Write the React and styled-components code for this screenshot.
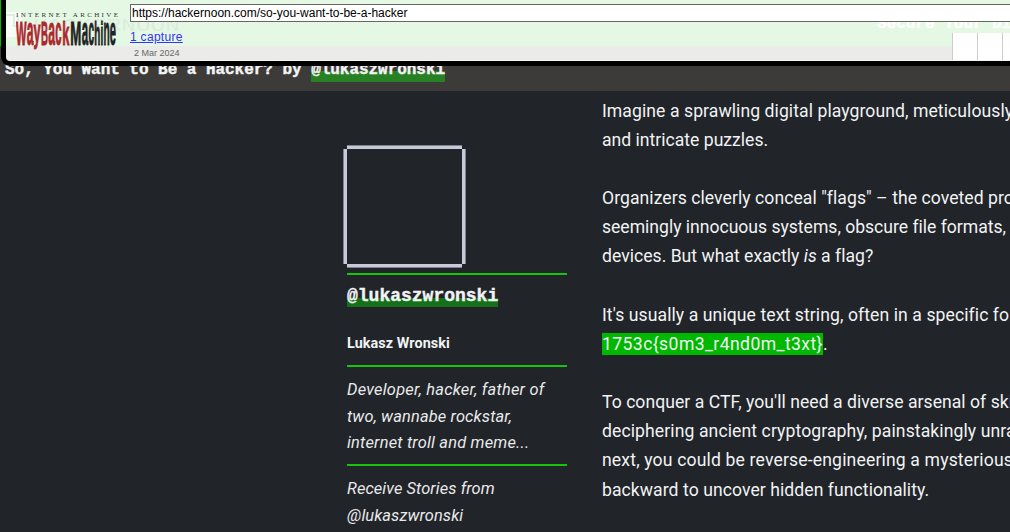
import React from "react";
import styled, { createGlobalStyle } from "styled-components";

const GlobalStyle = createGlobalStyle`
  *, *::before, *::after { box-sizing: border-box; }
  html, body { margin: 0; height: 532px; overflow: hidden; background: #212428; }
  p, h1, h2, h3 { margin: 0; }
`;

const Page = styled.div`
  position: relative;
  width: 1010px;
  height: 532px;
  overflow: hidden;
  background: #212428;
  color: #f1f3f5;
  font-family: Roboto, "Liberation Sans", sans-serif;
`;

/* Archive toolbar, floating over the site header */
const ArchiveBar = styled.header`
  position: absolute;
  z-index: 2;
  top: 0;
  left: 1px;
  width: 1040px;
  height: 66px;
  display: flex;
  overflow: hidden;
  border: solid #000;
  border-width: 0 0 5px 5px;
  border-radius: 0 0 0 9px;
  background: linear-gradient(#e4f8e4 0 46px, #ebebea 46px 60px, #f6f6f5 60px);
  font-family: "Liberation Sans", sans-serif;
`;

const LogoColumn = styled.div`
  position: relative;
  flex: none;
  width: 124px;
  padding: 9px 0 0 10px;
`;

const CaptureColumn = styled.div`
  position: relative;
  flex: 1;
  display: flex;
  flex-direction: column;
  align-items: flex-start;
`;

const UrlField = styled.div`
  position: relative;
  z-index: 1;
  width: 100%;
  height: 18px;
  margin-top: 4px;
  padding-left: 1px;
  border: 1px solid #666;
  background: #fff;
  color: #000;
  font-size: 12px;
  line-height: 16px;
  letter-spacing: 0;
`;

const CaptureLink = styled.a`
  margin-top: 8px;
  color: #33f;
  font-size: 12px;
  line-height: 14px;
  letter-spacing: 0.3px;
  text-decoration: underline;
`;

const CaptureDate = styled.div`
  margin: 3px 0 0 4px;
  color: #666;
  font-size: 9px;
  line-height: 12px;
`;

const Sparkline = styled.div`
  position: absolute;
  top: 33px;
  left: 822px;
  display: flex;
`;

const Year = styled.span`
  width: 25px;
  height: 27px;
  border-left: 1px solid #ccc;
  background: #fff;
`;

const GhostMark = styled.svg`
  position: absolute;
  top: 0;
  left: 0;
  overflow: visible;
`;

const GhostBanner = styled.span`
  position: absolute;
  top: 15px;
  left: 747px;
  color: #fff;
  font: bold 16px/18px "Liberation Mono", monospace;
  -webkit-text-stroke: 0.5px #fff;
  white-space: pre;
`;

/* Site header and story title */
const SiteHeader = styled.div`
  display: flex;
  flex-direction: column;
  height: 91px;
  background: #3c3b39;
`;

const BrandStrip = styled.div`
  flex: none;
  height: 46px;
  background: #00b800;
`;

const StoryTitle = styled.h1`
  padding: 14px 0 0 5px;
  color: #f4f4f4;
  font: bold 16px/20px "Liberation Mono", monospace;
  letter-spacing: -0.035px;
  -webkit-text-stroke: 0.4px #f4f4f4;
  white-space: pre;
`;

const TitleAuthor = styled.span`
  display: inline-block;
  height: 22px;
  background: linear-gradient(transparent 50%, #288025 50%);
`;

const Columns = styled.main`
  display: flex;
  align-items: flex-start;
  gap: 35px;
  padding-left: 347px;
`;

const Profile = styled.aside`
  flex: none;
  width: 220px;
  padding-top: 58px;
`;

const Avatar = styled.div`
  width: 115px;
  height: 115px;
  margin-bottom: 9px;
  background: #212428;
  box-shadow:
    0 -3px #c5cbd9, 0 3px #c5cbd9, -3px 0 #c5cbd9, 3px 0 #c5cbd9,
    0 -4px #7d828c, 0 4px #7d828c, -4px 0 #7d828c, 4px 0 #7d828c;
`;

const ProfileSection = styled.section`
  height: ${(p) => p.$height}px;
  padding-top: ${(p) => p.$top}px;
  border-top: 2px solid #15c40b;
`;

const Handle = styled.h2`
  width: max-content;
  height: 20px;
  background: linear-gradient(transparent 11px, #15701a 11px);
  font: bold 18px/19px "Liberation Mono", monospace;
  -webkit-text-stroke: 0.4px #f1f3f5;
`;

const RealName = styled.h3`
  margin-top: 28px;
  font-size: 14.4px;
  font-weight: 700;
  line-height: 18px;
  letter-spacing: 0.07px;
`;

const Bio = styled.p`
  font-size: 16.4px;
  font-style: italic;
  line-height: 26.5px;
  color: #e9eaec;
`;

const Article = styled.article`
  flex: none;
  width: 640px;
  padding-top: 5.6px;
`;

const Paragraph = styled.p`
  margin-bottom: 29px;
  font-size: 17.6px;
  line-height: 29.2px;
`;

const Line = styled.span`
  display: block;
  white-space: pre;
  letter-spacing: ${(p) => p.$track || 0}px;
`;

const Flag = styled.mark`
  padding: 1px 0;
  background: #00b800;
  color: inherit;
  letter-spacing: 0.4px;
`;

const LogoSvg = styled.svg`
  position: relative;
  display: block;
`;

const LETTERS = [
  ["W", 0, 10.5, 33, 36], ["a", 10.7, 6.8, 40, 36], ["y", 17.6, 7, 32, 33], ["B", 25, 7, 33, 36],
  ["a", 32.2, 6.8, 40, 36], ["c", 39.2, 6.3, 40, 36], ["k", 46.2, 7.1, 33, 36],
  ["M", 54.3, 11, 33, 36], ["a", 65.8, 6.4, 40, 36], ["c", 72.4, 5.6, 40, 36], ["h", 78.2, 6, 33, 36],
  ["i", 84.4, 2.8, 33, 36], ["n", 87.4, 6.2, 40, 36], ["e", 93.8, 6.2, 40, 36],
];

function WaybackLogo() {
  return (
    <LogoSvg width="104" height="42" viewBox="0 0 104 42" fontFamily="Liberation Sans, sans-serif">
      <text x="0" y="7.6" fontFamily="Liberation Serif, serif" fontSize="7" fill="#333" textLength="102" lengthAdjust="spacing">
        INTERNET ARCHIVE
      </text>
      {LETTERS.map(([ch, x, w, size, y], i) => (
        <text
          key={i}
          x={x}
          y={y}
          fontSize={size}
          fontWeight="bold"
          fill={i < 7 ? "#ad272f" : "#222"}
          stroke={i < 7 ? "#ad272f" : "#222"}
          strokeWidth="1"
          textLength={w}
          lengthAdjust="spacingAndGlyphs"
        >
          {ch}
        </text>
      ))}
    </LogoSvg>
  );
}

function HackerNoonGhost() {
  return (
    <GhostMark width="176" height="46" viewBox="0 0 176 46">
      <rect x="0" y="12" width="16" height="25" fill="#f7fcf6" />
      <path d="M0 15h8v11h4V15" fill="none" stroke="#e0ede0" strokeWidth="2" />
      <text x="27" y="31" fontFamily="Liberation Mono, monospace" fontSize="19" fill="#dcecdd" textLength="147" lengthAdjust="spacingAndGlyphs">
        HACKERNOON
      </text>
    </GhostMark>
  );
}

export default function App() {
  return (
    <Page>
      <GlobalStyle />
      <ArchiveBar>
        <HackerNoonGhost />
        <LogoColumn>
          <WaybackLogo />
        </LogoColumn>
        <CaptureColumn>
          <GhostBanner>Secure Your Digital</GhostBanner>
          <UrlField>https://hackernoon.com/so-you-want-to-be-a-hacker</UrlField>
          <CaptureLink>1 capture</CaptureLink>
          <CaptureDate>2 Mar 2024</CaptureDate>
          <Sparkline>
            <Year />
            <Year />
            <Year />
          </Sparkline>
        </CaptureColumn>
      </ArchiveBar>

      <SiteHeader>
        <BrandStrip />
        <StoryTitle>
          So, You Want to Be a Hacker? by <TitleAuthor>@lukaszwronski</TitleAuthor>
        </StoryTitle>
      </SiteHeader>

      <Columns>
        <Profile>
          <Avatar />
          <ProfileSection $height={92} $top={12}>
            <Handle>@lukaszwronski</Handle>
            <RealName>Lukasz Wronski</RealName>
          </ProfileSection>
          <ProfileSection $height={99} $top={10}>
            <Bio>
              <Line $track={0.24}>Developer, hacker, father of</Line>
              <Line $track={0.15}>two, wannabe rockstar,</Line>
              <Line $track={0.2}>internet troll and meme...</Line>
            </Bio>
          </ProfileSection>
          <ProfileSection $height={70} $top={10}>
            <Bio>
              <Line $track={0.08}>Receive Stories from</Line>
              <Line $track={0.1}>@lukaszwronski</Line>
            </Bio>
          </ProfileSection>
        </Profile>

        <Article>
          <Paragraph>
            <Line $track={0.07}>Imagine a sprawling digital playground, meticulously crafted</Line>
            <Line>and intricate puzzles.</Line>
          </Paragraph>
          <Paragraph>
            <Line $track={0.05}>Organizers cleverly conceal "flags" – the coveted proof</Line>
            <Line $track={-0.02}>seemingly innocuous systems, obscure file formats, or</Line>
            <Line $track={0.01}>devices. But what exactly <i>is</i> a flag?</Line>
          </Paragraph>
          <Paragraph>
            <Line $track={0.08}>It's usually a unique text string, often in a specific format</Line>
            <Line>
              <Flag>{"1753c{s0m3_r4nd0m_t3xt}"}</Flag>.
            </Line>
          </Paragraph>
          <Paragraph>
            <Line $track={0.03}>To conquer a CTF, you'll need a diverse arsenal of skills</Line>
            <Line $track={0.09}>deciphering ancient cryptography, painstakingly unraveling</Line>
            <Line $track={0.15}>next, you could be reverse-engineering a mysterious</Line>
            <Line $track={0.06}>backward to uncover hidden functionality.</Line>
          </Paragraph>
        </Article>
      </Columns>
    </Page>
  );
}
